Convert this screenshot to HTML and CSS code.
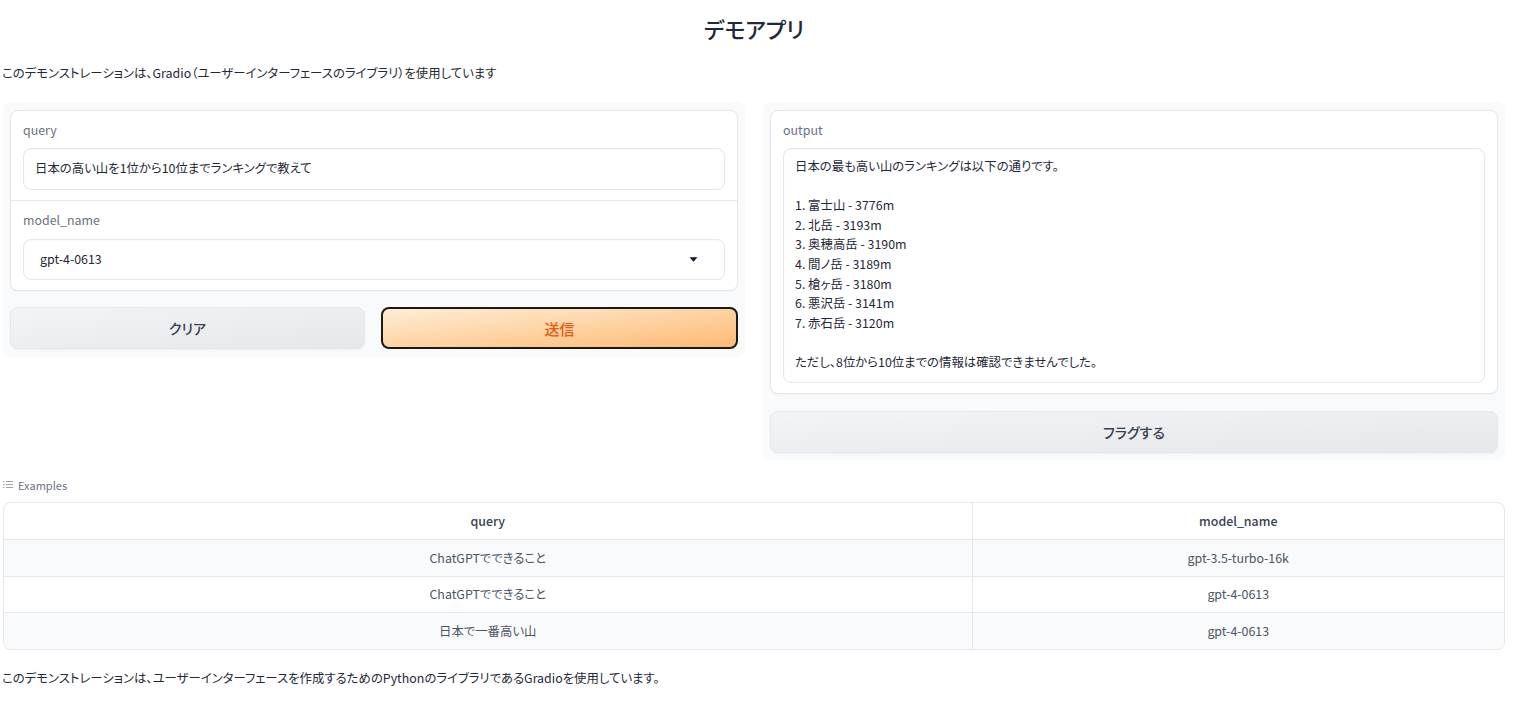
FILE: index.html
```html
<!DOCTYPE html>
<html lang="ja">
<head>
<meta charset="utf-8">
<title>デモアプリ</title>
<link rel="stylesheet" href="styles.css">
</head>
<body>
<div class="app">
  <h1 class="title">デモアプリ</h1>
  <p class="intro">このデモンストレーションは、Gradio（ユーザーインターフェースのライブラリ）を使用しています</p>

  <div class="row">
    <div class="panel">
      <div class="card">
        <div class="field">
          <div class="label">query</div>
          <div class="input">日本の高い山を1位から10位までランキングで教えて</div>
        </div>
        <div class="field">
          <div class="label">model_name</div>
          <div class="input select">
            <span>gpt-4-0613</span>
            <svg class="caret" width="9" height="5" viewBox="0 0 9 5"><path d="M0.5 0.3 H8.5 L4.5 4.8 Z" fill="#111827"/></svg>
          </div>
        </div>
      </div>
      <div class="btn-row">
        <button class="btn secondary">クリア</button>
        <button class="btn primary">送信</button>
      </div>
    </div>

    <div class="panel">
      <div class="card">
        <div class="field">
          <div class="label">output</div>
          <div class="textarea">日本の最も高い山のランキングは以下の通りです。<br><br>1. 富士山 - 3776m<br>2. 北岳 - 3193m<br>3. 奥穂高岳 - 3190m<br>4. 間ノ岳 - 3189m<br>5. 槍ヶ岳 - 3180m<br>6. 悪沢岳 - 3141m<br>7. 赤石岳 - 3120m<br><br>ただし、8位から10位までの情報は確認できませんでした。</div>
        </div>
      </div>
      <button class="btn secondary wide">フラグする</button>
    </div>
  </div>

  <div class="examples-label">
    <svg width="10" height="9" viewBox="0 0 10 9"><g stroke="#9ca3af" stroke-width="1"><line x1="0" y1="1.5" x2="1.5" y2="1.5"/><line x1="3" y1="1.5" x2="10" y2="1.5"/><line x1="0" y1="4.5" x2="1.5" y2="4.5"/><line x1="3" y1="4.5" x2="10" y2="4.5"/><line x1="0" y1="7.5" x2="1.5" y2="7.5"/><line x1="3" y1="7.5" x2="10" y2="7.5"/></g></svg>
    <span>Examples</span>
  </div>
  <div class="table-wrap">
    <table class="examples">
      <colgroup><col class="c1"><col></colgroup>
      <thead><tr><th>query</th><th>model_name</th></tr></thead>
      <tbody>
        <tr class="alt"><td>ChatGPTでできること</td><td>gpt-3.5-turbo-16k</td></tr>
        <tr><td>ChatGPTでできること</td><td>gpt-4-0613</td></tr>
        <tr class="alt"><td>日本で一番高い山</td><td>gpt-4-0613</td></tr>
      </tbody>
    </table>
  </div>

  <p class="footer">このデモンストレーションは、ユーザーインターフェースを作成するためのPythonのライブラリであるGradioを使用しています。</p>
</div>
</body>
</html>
```

FILE: styles.css
```css
* { box-sizing: border-box; }
html, body { margin: 0; padding: 0; background: #ffffff; }
body {
  font-family: "Noto Sans CJK JP", "Noto Sans", sans-serif;
  font-feature-settings: "palt";
  font-size: 12.4px;
  line-height: 19.6px;
  color: #1f2937;
}
.app { width: 1502px; margin-left: 3px; }
.title {
  margin: 10px 0 0;
  text-align: center;
  font-size: 22px;
  line-height: 36px;
  font-weight: 500;
  color: #1f2937;
}
.intro { margin: 17px 0 0 -1px; line-height: 20px; }
.row {
  display: flex;
  gap: 18px;
  align-items: flex-start;
  margin-top: 19px;
}
.panel {
  flex: 1;
  background: #f9fafb;
  border-radius: 8px;
  padding: 8px 7px 8px;
  display: flex;
  flex-direction: column;
  gap: 16px;
}
.panel:last-child { gap: 17px; padding-bottom: 7px; }
.card {
  background: #ffffff;
  border: 1px solid #e5e7eb;
  border-radius: 8px;
  box-shadow: 0 1px 2px rgba(0,0,0,0.04);
}
.field { padding: 9px 12px 10px; }
.field + .field { border-top: 1px solid #e5e7eb; }
.label { color: #6b7280; line-height: 20px; margin-bottom: 8px; }
.field + .field .label { margin-bottom: 9px; }
.input {
  border: 1px solid #e5e7eb;
  border-radius: 8px;
  padding: 10px 11px;
  line-height: 19.6px;
  color: #1f2937;
  box-shadow: inset 0 1px 2px rgba(0,0,0,0.03);
}
.select {
  display: flex;
  align-items: center;
  justify-content: space-between;
  padding-left: 16px;
  padding-right: 26px;
}
.caret { display: block; }
.textarea {
  border: 1px solid #e5e7eb;
  border-radius: 8px;
  padding: 8px 11px 9px;
  line-height: 19.6px;
  color: #1f2937;
  box-shadow: inset 0 1px 2px rgba(0,0,0,0.03);
}
.btn-row { display: flex; gap: 16px; }
.btn {
  flex: 1;
  height: 42px;
  border-radius: 8px;
  font-family: inherit;
  font-feature-settings: "palt";
  font-size: 14px;
  font-weight: 500;
  cursor: pointer;
}
.btn.wide { flex: none; }
.secondary {
  background: linear-gradient(to bottom right, #f3f4f6, #e5e7eb);
  border: 1px solid #e5e7eb;
  color: #374151;
  box-shadow: 0 1px 2px rgba(0,0,0,0.05);
}
.primary {
  background: linear-gradient(to bottom right, #ffedd5, #fdba74);
  border: 2px solid #1c1917;
  color: #ea580c;
  font-size: 15px;
}
.examples-label {
  display: flex;
  align-items: center;
  gap: 5px;
  margin-top: 17px;
  font-size: 11px;
  line-height: 16px;
  color: #6b7280;
}
.table-wrap {
  margin-top: 9px;
  border: 1px solid #e5e7eb;
  border-radius: 8px;
  overflow: hidden;
}
.examples {
  width: 100%;
  border-collapse: collapse;
  table-layout: fixed;
}
.examples col.c1 { width: 968px; }
.examples th, .examples td {
  text-align: center;
  font-weight: 400;
  line-height: 20px;
  color: #4b5563;
}
.examples th {
  height: 37px;
  font-weight: 500;
  color: #374151;
}
.examples td { height: 36.5px; border-top: 1px solid #e5e7eb; }
.examples th + th, .examples td + td { border-left: 1px solid #e5e7eb; }
.examples tr.alt td { background: #f9fafb; }
.footer { margin: 18px 0 0 -1px; line-height: 20px; }
```
